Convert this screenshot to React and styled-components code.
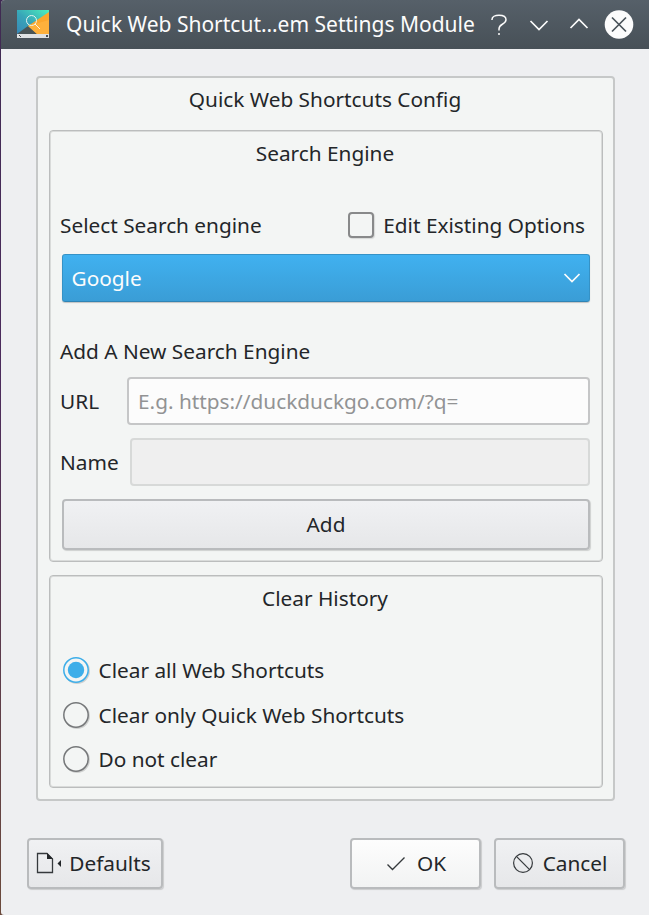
import React from "react";
import styled, { createGlobalStyle, css } from "styled-components";

const GlobalStyle = createGlobalStyle`
  * { box-sizing: border-box; }
  html, body { margin: 0; height: 100%; overflow: hidden; }
  body {
    font-family: "Noto Sans", sans-serif;
    font-size: 20.8px;
    line-height: 30px;
    color: #232629;
  }
  button, input { font: inherit; color: inherit; }
`;

const Desktop = styled.div`
  width: 649px;
  height: 915px;
  padding-left: 1px;
  background: linear-gradient(#3f2a52, #4b2a5c 40%, #5b3a4c 70%, #6b4a3c);
`;

const Window = styled.div`
  height: 100%;
  display: flex;
  flex-direction: column;
  background: #eeeff1;
  border-radius: 4px 0 0 3px;
  overflow: hidden;
`;

const TitleBar = styled.header`
  height: 49px;
  flex: none;
  display: flex;
  align-items: center;
  padding: 0 15px 0 16px;
  color: #fcfcfc;
  background: linear-gradient(#566069, #475057);
`;

const AppIcon = styled.svg`
  width: 32px;
  height: 28px;
  margin: 0 17px 1px 0;
  flex: none;
`;

const Title = styled.h1`
  margin: 0;
  padding-bottom: 1px;
  font-size: 21px;
  font-weight: 400;
  white-space: nowrap;
  flex: 1;
`;

const WindowControls = styled.div`
  display: flex;
  gap: 10px;
`;

const ControlButton = styled.button`
  width: 30px;
  height: 30px;
  padding: 0;
  border: 0;
  background: none;
  display: flex;
  svg { width: 30px; height: 30px; }
`;

const Content = styled.main`
  padding: 27px 34px 0 35px;
`;

const Frame = styled.section`
  border: 2px solid #c6c8c8;
  border-radius: 4px;
  background: #f3f5f4;
`;

const OuterFrame = styled(Frame)`
  height: 725px;
  padding: 6px 10px 0 11px;
`;

const GroupFrame = styled(Frame)`
  height: ${(p) => p.$height}px;
  margin-top: ${(p) => p.$gap}px;
  padding: 7px 12px 0 10px;
  border: 1px solid #bbbdbd;
  box-shadow: inset 0 0 0 1px #d9dbda;
`;

const Heading = styled.h2`
  margin: 0;
  font-size: inherit;
  font-weight: 400;
  text-align: center;
  height: 30px;
`;

const PageHeading = styled(Heading)`
  padding-right: 2px;
`;

const Row = styled.div`
  display: flex;
  align-items: center;
  justify-content: space-between;
  height: ${(p) => p.$height}px;
  margin-top: ${(p) => p.$gap || 0}px;
`;

const CheckLabel = styled.label`
  display: flex;
  align-items: center;
  gap: 9px;
  padding-right: 5px;
`;

const CheckBox = styled.span`
  width: 26px;
  height: 26px;
  border: 2px solid #88898a;
  border-radius: 4px;
  background: #f3f5f4;
  box-shadow: 1px 1px 1px rgba(0, 0, 0, 0.12);
`;

const Select = styled.button`
  display: flex;
  align-items: center;
  justify-content: space-between;
  width: 528px;
  height: 48px;
  margin: 13px 0 0 2px;
  padding: 0 8px 0 8.5px;
  border: 1px solid #3592c6;
  border-bottom-color: #2f84b5;
  border-radius: 3px;
  color: #fcfcfc;
  background: linear-gradient(#40b1f0, #3a9dd6);
  box-shadow: 0 1px 1px rgba(0, 0, 0, 0.2);
  svg { width: 18px; height: 12px; margin-bottom: 1px; }
`;

const Input = styled.input`
  width: ${(p) => p.$width}px;
  height: 48px;
  padding: 0 9px;
  border: 2px solid #c5c6c7;
  border-radius: 4px;
  background: #fcfcfc;
  &::placeholder { color: #929394; opacity: 1; }
  &:disabled { background: #efefef; border-color: #d7d9d8; }
`;

const Button = styled.button`
  display: flex;
  align-items: center;
  justify-content: center;
  height: 51px;
  padding: 0 ${(p) => p.$shift || 0}px 1px 0;
  border: 2px solid #b9bbbd;
  border-radius: 4px;
  background: linear-gradient(#f0f1f3, #e6e7e9);
  box-shadow: 1px 1px 1px rgba(0, 0, 0, 0.15);
  ${(p) => p.$primary && css`background: linear-gradient(#fdfdfd, #f2f3f3);`}
  ${(p) => p.$width && css`width: ${p.$width}px;`}
  svg { width: ${(p) => p.$icon || 22}px; height: 22px; margin-right: ${(p) => p.$space || 9}px; }
`;

const AddButton = styled(Button)`
  width: 528px;
  margin: 13px 0 0 2px;
`;

const Options = styled.div`
  margin-top: 35px;
`;

const RadioLabel = styled.label`
  display: flex;
  align-items: center;
  height: 44.5px;
  padding-left: 3px;
  gap: 9.5px;
`;

const RadioMark = styled.svg`
  width: 26px;
  height: 26px;
  flex: none;
  filter: drop-shadow(1px 1px 0.5px rgba(0, 0, 0, 0.15));
`;

const Footer = styled.footer`
  display: flex;
  gap: 13px;
  margin-top: 37px;
  padding: 0 24px 0 26px;
`;

const Spacer = styled.div`
  flex: 1;
`;

function Radio({ checked }) {
  return (
    <RadioMark viewBox="0 0 26 26">
      <circle cx="13" cy="13" r="12.200" fill="#f3f5f4" stroke={checked ? "#3daee9" : "#76787a"} strokeWidth="1.5" />
      {checked && <circle cx="13" cy="13" r="8.200" fill="#3daee9" />}
    </RadioMark>
  );
}

const radios = ["Clear all Web Shortcuts", "Clear only Quick Web Shortcuts", "Do not clear"];

const line = { fill: "none", stroke: "#fcfcfc", strokeWidth: 1.7 };
const dark = { fill: "none", stroke: "#35393c", strokeWidth: 1.2 };

export default function App() {
  return (
    <>
      <GlobalStyle />
      <Desktop>
        <Window>
          <TitleBar>
            <AppIcon viewBox="0 0 32 28">
              <defs>
                <linearGradient id="sky" x1="0" y1="1" x2="1" y2="0">
                  <stop offset="0" stopColor="#3987b8" />
                  <stop offset="0.45" stopColor="#37a5b8" />
                  <stop offset="1" stopColor="#4df0bd" />
                </linearGradient>
              </defs>
              <path d="M0 0H32V24H0z" fill="url(#sky)" />
              <path d="M32 2V24H18L11 16z" fill="#fca72d" />
              <path d="M0 24L11 16L20 24z" fill="#4a5557" />
              <path d="M11 16L32 10V24H20z" fill="#ffb442" opacity=".75" />
              <path d="M0 24H32V28H0z" fill="#dfe2e4" />
              <path d="M2 25l2 2" stroke="#4a4f53" />
              <path d="M29 25h2v2h-2z" fill="#4a4f53" />
              <circle cx="14.5" cy="10.5" r="5" fill="none" stroke="#e8f4f0" />
              <path d="M18 14l5 5" stroke="#fff3df" />
            </AppIcon>
            <Title>Quick Web Shortcut…em Settings Module</Title>
            <WindowControls>
              <ControlButton aria-label="Help">
                <svg viewBox="0 0 30 30" {...line}>
                  <path d="M8 10V9.500C8 7 11 5.300 15 5.300C19.500 5.300 22 7 22 9.700C22 12 20 13.300 18 14.500C16 15.700 15 17 15 19V20.500M15 23V25" strokeWidth="1.5" />
                </svg>
              </ControlButton>
              <ControlButton aria-label="Minimize">
                <svg viewBox="0 0 30 30" {...line}><path d="M6.500 11L15 19.500L23.500 11" /></svg>
              </ControlButton>
              <ControlButton aria-label="Maximize">
                <svg viewBox="0 0 30 30" {...line}><path d="M6.500 18L15 9.500L23.500 18" /></svg>
              </ControlButton>
              <ControlButton aria-label="Close">
                <svg viewBox="0 0 30 30">
                  <circle cx="15" cy="14.500" r="14.300" fill="#fcfcfc" />
                  <path d="M8 7.500L22 21.500M22 7.500L8 21.500" stroke="#4b545b" strokeWidth="1.7" />
                </svg>
              </ControlButton>
            </WindowControls>
          </TitleBar>
          <Content>
            <OuterFrame>
              <PageHeading>Quick Web Shortcuts Config</PageHeading>
              <GroupFrame $height={432} $gap={16}>
                <Heading>Search Engine</Heading>
                <Row $height={32} $gap={41}>
                  <span>Select Search engine</span>
                  <CheckLabel><CheckBox />Edit Existing Options</CheckLabel>
                </Row>
                <Select>
                  Google
                  <svg viewBox="0 0 18 12" {...line}><path d="M1.500 2L9 9.500L16.500 2" /></svg>
                </Select>
                <Row $height={30} $gap={34}>Add A New Search Engine</Row>
                <Row $height={48} $gap={11}>
                  <span>URL</span>
                  <Input $width={463} placeholder="E.g. https://duckduckgo.com/?q=" />
                </Row>
                <Row $height={48} $gap={13}>
                  <span>Name</span>
                  <Input $width={460} disabled />
                </Row>
                <AddButton>Add</AddButton>
              </GroupFrame>
              <GroupFrame $height={213} $gap={13}>
                <Heading>Clear History</Heading>
                <Options>
                  {radios.map((text, i) => (
                    <RadioLabel key={text}><Radio checked={i === 0} />{text}</RadioLabel>
                  ))}
                </Options>
              </GroupFrame>
            </OuterFrame>
          </Content>
          <Footer>
            <Button $width={136} $icon={26} $space={7} $shift={3}>
              <svg viewBox="0 0 26 22">
                <path d="M1.500 1.500H11L16.500 7V20.500H1.500z" {...dark} strokeWidth="1.3" />
                <path d="M11 1V7H17z" fill="#232629" />
                <path d="M25 8V15L21.500 11.500z" fill="#232629" />
              </svg>
              Defaults
            </Button>
            <Spacer />
            <Button $width={131} $primary $space={10}>
              <svg viewBox="0 0 22 22" {...dark}><path d="M2.500 12.500L7.500 17.500L19.500 5.500" strokeWidth="1.4" /></svg>
              OK
            </Button>
            <Button $width={131}>
              <svg viewBox="0 0 22 22" {...dark}><circle cx="11" cy="11" r="9.400" /><path d="M4.400 4.400L17.600 17.600" /></svg>
              Cancel
            </Button>
          </Footer>
        </Window>
      </Desktop>
    </>
  );
}
